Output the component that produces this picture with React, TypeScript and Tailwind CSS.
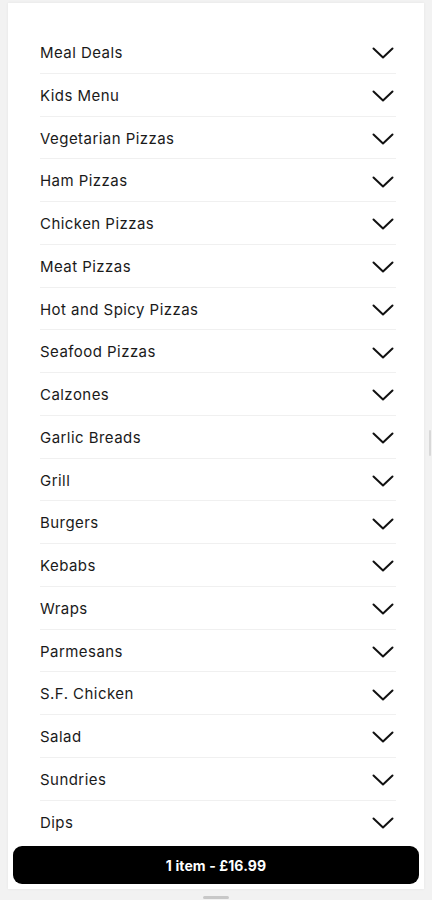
import React from "react";

const items = [
  "Meal Deals",
  "Kids Menu",
  "Vegetarian Pizzas",
  "Ham Pizzas",
  "Chicken Pizzas",
  "Meat Pizzas",
  "Hot and Spicy Pizzas",
  "Seafood Pizzas",
  "Calzones",
  "Garlic Breads",
  "Grill",
  "Burgers",
  "Kebabs",
  "Wraps",
  "Parmesans",
  "S.F. Chicken",
  "Salad",
  "Sundries",
  "Dips",
];

function Chevron() {
  return (
    <svg width="22" height="12" viewBox="0 0 22 12" fill="none">
      <polyline points="1.5,1.5 11,10.5 20.5,1.5" stroke="#111" strokeWidth="2" strokeLinecap="round" strokeLinejoin="round" />
    </svg>
  );
}

export default function App() {
  return (
    <div
      className="w-[432px] h-[900px] bg-[#f2f2f2] flex flex-col items-center overflow-hidden relative"
      style={{ fontFamily: "Inter, 'Open Sans', sans-serif" }}
    >
      <div className="mt-[3px] w-[416px] h-[886px] bg-white flex flex-col shadow-[0_0_3px_rgba(0,0,0,0.06)]">
        <div className="pt-[28px] pl-[32px] pr-[28px] flex flex-col">
          {items.map((it, i) => (
            <div
              key={it}
              className={`h-[42.75px] flex items-center justify-between pt-[3px] ${
                i < items.length - 1 ? "border-b border-[#f0f0f0]" : ""
              }`}
            >
              <span className="text-[15px] text-[#1a1a1a] tracking-[0.45px]">{it}</span>
              <span className="mr-[2px]">
                <Chevron />
              </span>
            </div>
          ))}
        </div>
        <div className="mt-[3px] px-[5px]">
          <button className="w-full h-[38px] bg-black rounded-[9px] text-white font-bold text-[14px] tracking-[0.1px] flex items-center justify-center">
            1 item - £16.99
          </button>
        </div>
      </div>
      <div className="mt-[7px] w-[26px] h-[3px] bg-[#c8c8c8] rounded-full" />
      <div className="absolute right-[1px] top-[430px] w-[2px] h-[26px] bg-[#d8d8d8] rounded-full" />
    </div>
  );
}
